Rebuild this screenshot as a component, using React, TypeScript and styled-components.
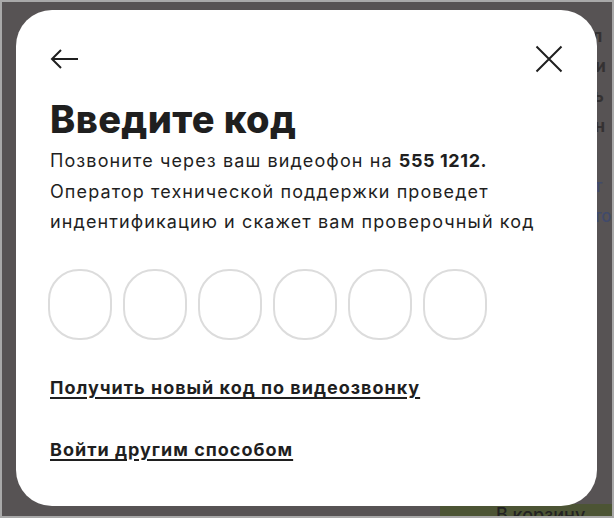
import React from "react";
import styled, { createGlobalStyle } from "styled-components";

const Global = createGlobalStyle`
  html, body { margin: 0; padding: 0; background: #fff; }
  body { font-family: Inter, "Noto Sans", Arial, sans-serif; }
  * { box-sizing: border-box; }
`;

const Frame = styled.div`
  position: relative;
  width: 614px;
  height: 518px;
  border: 2px solid #a9a9a9;
  background: #575354;
  overflow: hidden;
`;

const PageBehind = styled.div`
  display: flex;
  flex-direction: column;
  align-items: flex-end;
  height: 100%;
  padding: 22px 0 0 0;
`;

const BehindColumn = styled.div`
  width: 28px;
  display: flex;
  flex-direction: column;
  gap: 6px;
  font: 700 17px/24px Inter, Arial, sans-serif;
  white-space: nowrap;
`;

const BehindLine = styled.div<{ $c?: string }>`
  color: ${(p) => p.$c || "#1e1c1d"};
  opacity: 0.6;
  font-weight: ${(p) => (p.$c ? 500 : 700)};
`;

const Spacer = styled.div`
  flex: 1;
`;

const GreenBar = styled.div`
  align-self: stretch;
  margin-left: 438px;
  height: 12px;
  background: #4c5434;
  color: #222;
  font: 500 18px/1 Inter, Arial, sans-serif;
  padding: 2px 0 0 56px;
  overflow: hidden;
  white-space: nowrap;
`;

const Modal = styled.div`
  position: absolute;
  left: 14px;
  top: 8px;
  width: 581px;
  height: 496px;
  background: #fff;
  border-radius: 36px;
  padding: 34px 34px 0 34px;
  display: flex;
  flex-direction: column;
  color: #1f1f1f;
`;

const Header = styled.div`
  display: flex;
  justify-content: space-between;
  align-items: center;
  height: 30px;
`;

const IconButton = styled.button`
  border: 0;
  background: none;
  padding: 0;
  display: flex;
  cursor: pointer;
`;

const Title = styled.h1`
  margin: 23px 0 0 0;
  font: 800 38px/44px Inter, Arial, sans-serif;
  letter-spacing: 0.4px;
  color: #1f1f1f;
`;

const Text = styled.p`
  margin: 5px 0 0 0;
  font: 400 18px/30.5px Inter, Arial, sans-serif;
  letter-spacing: 1.1px;
  color: #1f1f1f;
  white-space: nowrap;
`;

const Strong = styled.b`
  font-weight: 700;
  letter-spacing: 0.6px;
`;

const Cells = styled.div`
  display: flex;
  gap: 11px;
  margin-top: 31px;
  margin-left: -2px;
`;

const Cell = styled.div`
  width: 64px;
  height: 71px;
  border: 2px solid #dcdcdc;
  border-radius: 31px;
`;

const Link = styled.a<{ $mt: number }>`
  margin-top: ${(p) => p.$mt}px;
  align-self: flex-start;
  font: 700 18px/24px Inter, Arial, sans-serif;
  color: #1f1f1f;
  text-decoration: underline;
  text-decoration-thickness: 2px;
  text-underline-offset: 3px;
  letter-spacing: 1px;
`;

export default function App() {
  return (
    <>
      <Global />
      <Frame>
        <PageBehind>
          <BehindColumn>
            <BehindLine>-л</BehindLine>
            <BehindLine>ди</BehindLine>
            <BehindLine>вь</BehindLine>
            <BehindLine>ин</BehindLine>
            <BehindLine>ы</BehindLine>
            <BehindLine $c="#33457a">от</BehindLine>
            <BehindLine $c="#33457a">кто</BehindLine>
          </BehindColumn>
          <Spacer />
          <GreenBar>В корзину</GreenBar>
        </PageBehind>
        <Modal>
          <Header>
            <IconButton aria-label="Назад">
              <svg width="29" height="22" viewBox="0 0 29 22" fill="none">
                <path d="M2 11H28M11 2L2 11L11 20" stroke="#1f1f1f" strokeWidth="2" />
              </svg>
            </IconButton>
            <IconButton aria-label="Закрыть">
              <svg width="28" height="28" viewBox="0 0 28 28" fill="none">
                <path d="M1.5 1.5L26.5 26.5M26.5 1.5L1.5 26.5" stroke="#1f1f1f" strokeWidth="2" />
              </svg>
            </IconButton>
          </Header>
          <Title>Введите код</Title>
          <Text>
            Позвоните через ваш видеофон на <Strong>555 1212.</Strong>
            <br />
            Оператор технической поддержки проведет
            <br />
            индентификацию и скажет вам проверочный код
          </Text>
          <Cells>
            {Array.from({ length: 6 }).map((_, i) => (
              <Cell key={i} />
            ))}
          </Cells>
          <Link href="#" $mt={36}>Получить новый код по видеозвонку</Link>
          <Link href="#" $mt={38}>Войти другим способом</Link>
        </Modal>
      </Frame>
    </>
  );
}
